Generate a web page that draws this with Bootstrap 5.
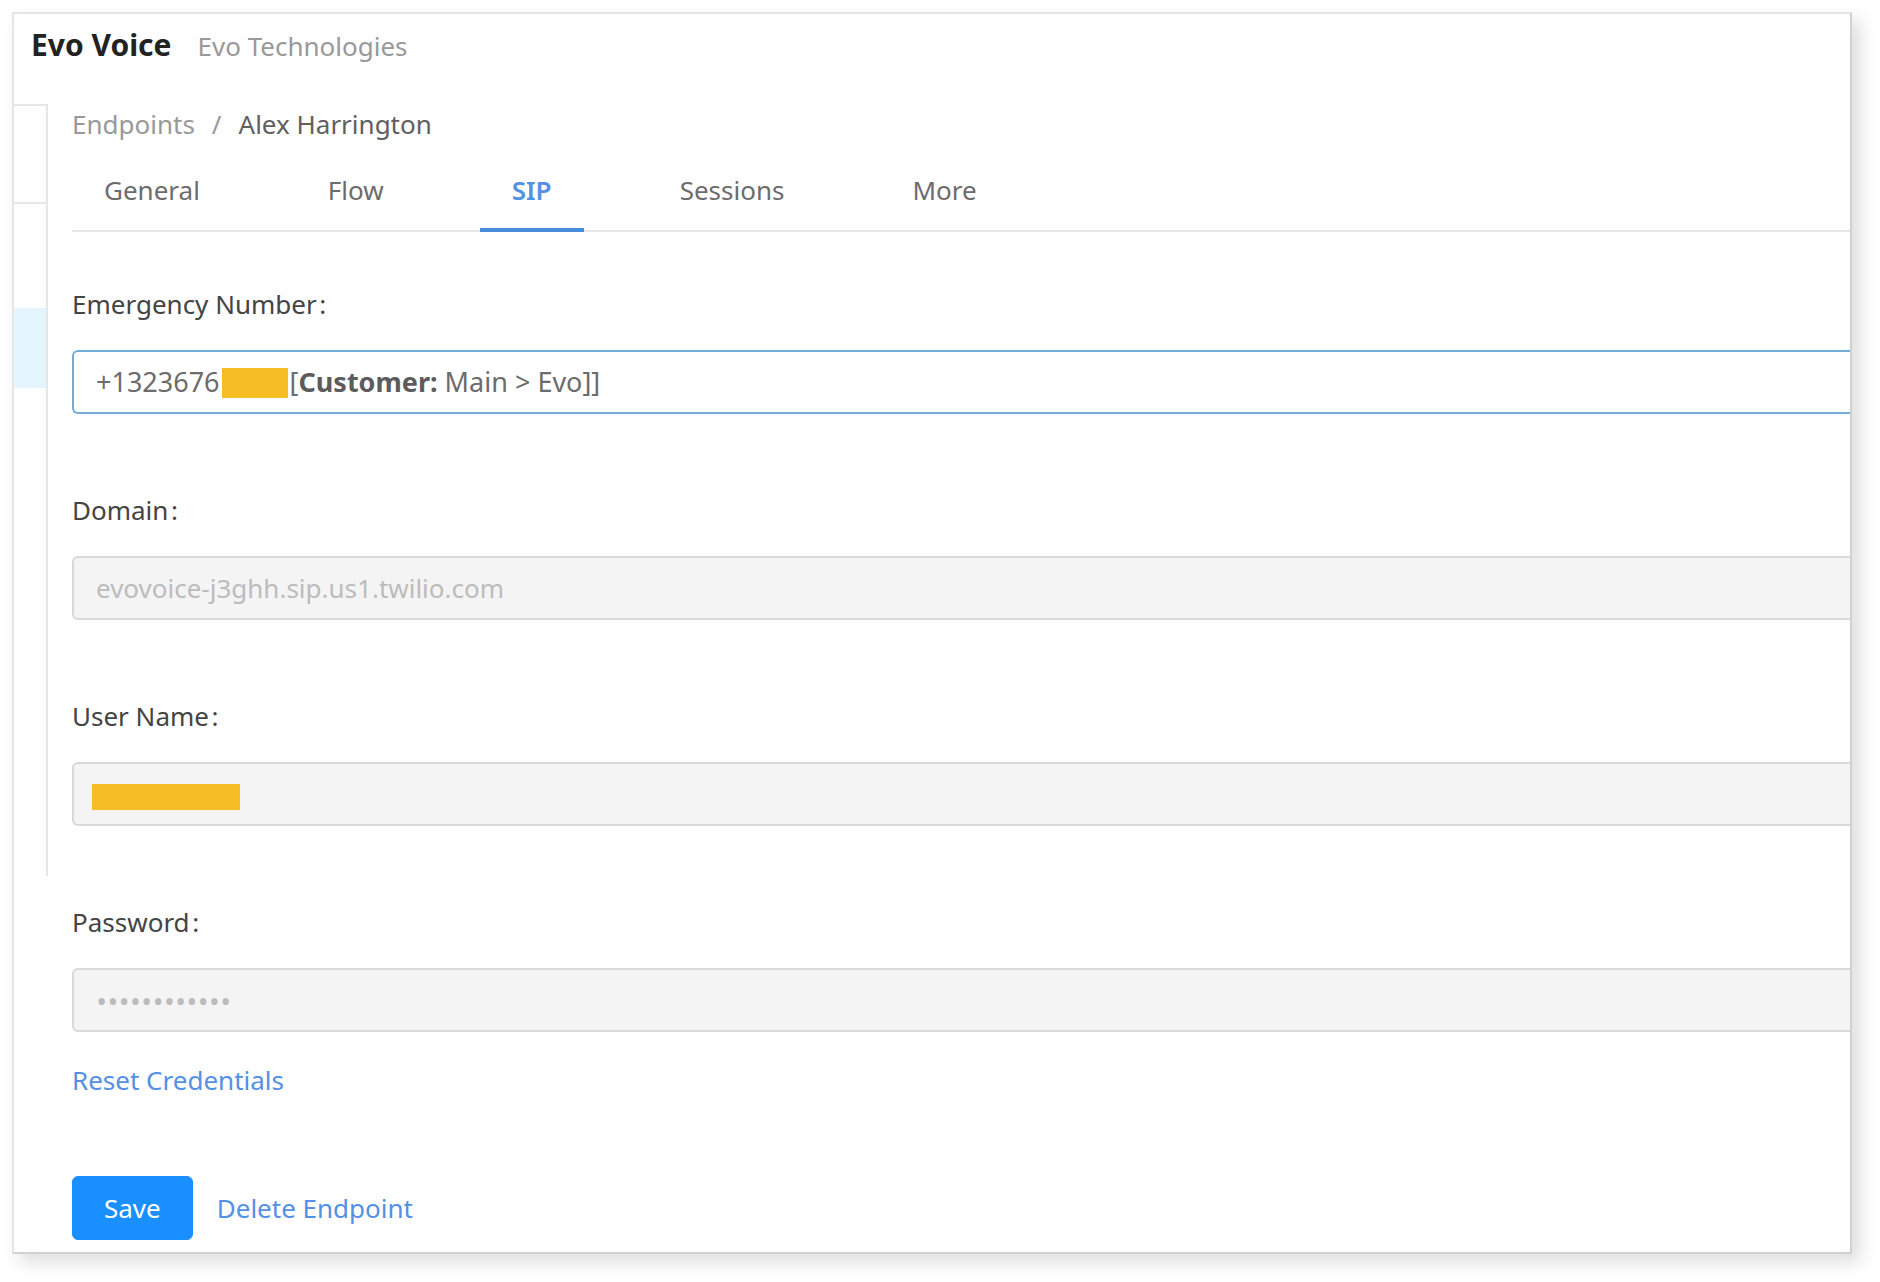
<!DOCTYPE html>
<html lang="en">
<head>
<meta charset="utf-8">
<meta name="viewport" content="width=device-width, initial-scale=1">
<title>Evo Voice</title>
<link href="https://cdn.jsdelivr.net/npm/bootstrap@5.3.0/dist/css/bootstrap.min.css" rel="stylesheet">
<style>
  body { font-family: "Noto Sans", "Open Sans", sans-serif; font-size: 26px; line-height: 32px; color: #6c6c6c; background: #fff; }
  a { color: #5490e4; text-decoration: none; }
  .app-panel { margin: 12px 28px 28px 12px; border: 2px solid #e6e6e6; border-right-color: #d2d1d2; border-bottom-color: #d2d1d2; background: #fefefe; box-shadow: 8px 8px 16px rgba(70, 60, 62, .17); }
  .app-header { padding: 15px 16px 0 17px; height: 90px; gap: 26px; }
  .app-title { font-size: 30px; line-height: 32px; font-weight: 700; color: #222; }
  .app-company { color: #999; }
  .side-rail { width: 34px; height: 772px; border-right: 2px solid #e6e6e6; }
  .rail-row { border-top: 2px solid #e6e6e6; height: 98px; }
  .rail-current { background: #e4f5fe; height: 80px; margin-top: 8px; }
  .page-main { padding: 4px 0 12px 24px; min-width: 0; }
  .crumbs { --bs-breadcrumb-divider-color: #999; --bs-breadcrumb-item-padding-x: 17px; --bs-breadcrumb-font-size: 26px; }
  .crumbs a { color: #999; }
  .crumbs .active { color: #606060; }
  .page-tabs { border-bottom: 2px solid #e6e6e6; gap: 64px; margin-top: 34px; }
  .page-tabs .nav-link { color: #6c6c6c; padding: 0 32px 22px; margin-bottom: -2px; border-bottom: 4px solid transparent; }
  .page-tabs .nav-link.active { color: #5490e4; font-weight: 600; border-bottom-color: #478ddd; }
  .fields { padding-top: 56px; gap: 80px; }
  .field-label { color: #444; margin: 0 0 30px; display: block; }
  .field-box { height: 64px; padding: 14px 22px; border: 2px solid #d9d9d9; border-right: 0; border-radius: 6px 0 0 6px; font-size: 26px; line-height: 32px; color: #6c6c6c; background: #fff; text-align: left; }
  .field-box:disabled { background: #f4f4f4; color: #bcbcbc; opacity: 1; }
  .field-secret { font-family: "Open Sans", sans-serif; font-size: 30px; }
  .field-pick { border-color: #74acd9; font-size: 27px; white-space: nowrap; }
  .field-pick strong { color: #5c5c5c; }
  .redact { background: #f5bc23; display: inline-block; }
  .redact-number { width: 66px; height: 30px; margin: 2px 2px 0 2px; }
  .redact-user { position: absolute; left: 20px; top: 22px; width: 148px; height: 26px; }
  .form-actions { margin-top: 80px; gap: 24px; }
  .btn-save { --bs-btn-bg: #1a8fff; --bs-btn-border-color: #1a8fff; --bs-btn-color: #fff; --bs-btn-font-size: 26px; --bs-btn-line-height: 32px; --bs-btn-padding-x: 31px; --bs-btn-padding-y: 15px; --bs-btn-border-radius: 6px; }
</style>
</head>
<body>
<div class="app-panel">
  <header class="app-header d-flex align-items-baseline">
    <h1 class="app-title m-0">Evo Voice</h1>
    <span class="app-company">Evo Technologies</span>
  </header>
  <div class="d-flex align-items-start">
    <aside class="side-rail flex-shrink-0">
      <div class="rail-row"></div>
      <div class="rail-row"></div>
      <div class="rail-current"></div>
    </aside>
    <main class="page-main flex-grow-1">
      <nav aria-label="Breadcrumb">
        <ol class="breadcrumb crumbs mb-0">
          <li class="breadcrumb-item"><a href="#">Endpoints</a></li>
          <li class="breadcrumb-item active" aria-current="page">Alex Harrington</li>
        </ol>
      </nav>
      <nav class="nav page-tabs">
        <a class="nav-link" href="#">General</a>
        <a class="nav-link" href="#">Flow</a>
        <a class="nav-link active" aria-current="page" href="#">SIP</a>
        <a class="nav-link" href="#">Sessions</a>
        <a class="nav-link" href="#">More</a>
      </nav>
      <form>
        <div class="fields d-flex flex-column">
          <div>
            <label class="field-label" for="emergency">Emergency Number&#8202;:</label>
            <button type="button" id="emergency" class="field-box field-pick d-flex align-items-center w-100">
              <span>+1323676</span><span class="redact redact-number"></span><span>[<strong>Customer:</strong> Main &gt; Evo]]</span>
            </button>
          </div>
          <div>
            <label class="field-label" for="domain">Domain&#8202;:</label>
            <input type="text" id="domain" class="field-box form-control" value="evovoice-j3ghh.sip.us1.twilio.com" disabled>
          </div>
          <div>
            <label class="field-label" for="username">User Name&#8202;:</label>
            <div class="position-relative">
              <input type="text" id="username" class="field-box form-control" disabled>
              <span class="redact redact-user"></span>
            </div>
          </div>
          <div>
            <label class="field-label" for="password">Password&#8202;:</label>
            <input type="password" id="password" class="field-box field-secret form-control" value="abcdefghijkl" disabled>
            <a href="#" class="d-inline-block mt-4 pt-2">Reset Credentials</a>
          </div>
        </div>
        <div class="form-actions d-flex align-items-center">
          <button type="submit" class="btn btn-save">Save</button>
          <a href="#">Delete Endpoint</a>
        </div>
      </form>
    </main>
  </div>
</div>
<script src="https://cdn.jsdelivr.net/npm/bootstrap@5.3.0/dist/js/bootstrap.bundle.min.js"></script>
</body>
</html>
